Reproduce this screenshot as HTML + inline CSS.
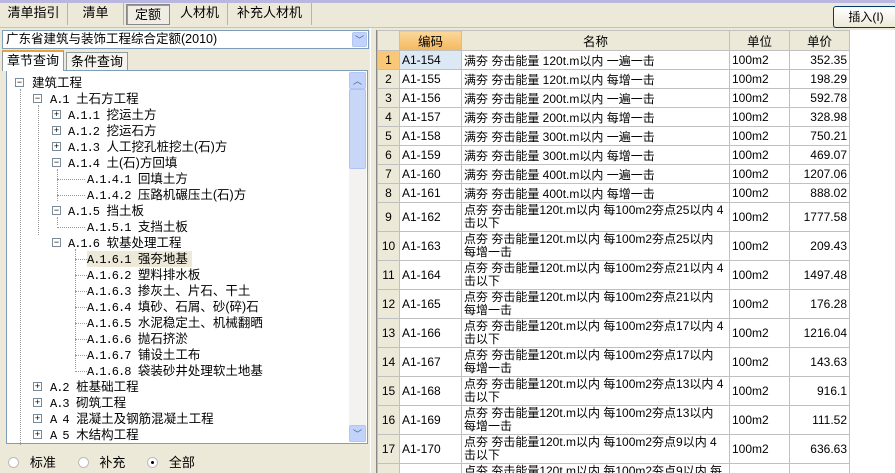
<!DOCTYPE html>
<html><head><meta charset="utf-8"><style>
*{margin:0;padding:0;box-sizing:border-box}
html,body{width:895px;height:473px;overflow:hidden}
body{background:#ece9d8;font-family:"Liberation Sans","WenQuanYi Zen Hei","Noto Sans CJK SC",sans-serif;font-size:12px;color:#000;position:relative}
.abs{position:absolute}
.m{font-family:"Liberation Mono",monospace;font-size:12px;letter-spacing:-1px;margin-right:4px}
.topline{left:0;top:0;width:895px;height:3px;background:#b9b6e0}
.tab{top:3px;height:22px;line-height:20px;font-size:13px;text-align:center;border-right:1px solid #b8b4a0}
.tabsel{border:1px solid #888;background:#f0eee4;box-shadow:inset 1px 1px 0 #999}
.ins{left:833px;top:6px;width:66px;height:22px;border:1px solid #003c74;border-radius:3px;background:linear-gradient(#fff,#ece9d8);text-align:center;line-height:20px;font-size:12px}
.combo{left:2px;top:30px;width:367px;height:19px;background:#fff;border:1px solid #7f9db9;line-height:17px;padding-left:3px;font-size:12.5px}
.cbtn{right:1px;top:1px;width:15px;height:15px;background:#c1d3fb;border:1px solid #b3c6f2;border-radius:2px;color:#4d6185;font-size:9px;text-align:center;line-height:14px}
.ltab{top:52px;height:19px;line-height:18px;font-size:13px;padding:0 4px;border:1px solid #919b9c;border-bottom:none;background:#f4f3ee}
.tree{left:6px;top:70px;width:362px;height:374px;background:#fff;border:1px solid #7f9db9}
.sb{left:349px;top:72px;width:17px;height:370px;background:#f3f2ee}
.sbb{width:17px;height:17px;background:#c1d3fb;border:1px solid #b3c6f2;border-radius:2px;color:#4d6185;font-size:9px;text-align:center;line-height:16px;position:absolute;left:0}
.thumb{position:absolute;left:0;top:17px;width:17px;height:80px;background:#c8d6f8;border:1px solid #b0c2ee;border-radius:2px}
.ti{position:absolute;height:16px;line-height:16px;font-size:12.5px;white-space:nowrap}
.bx{position:absolute;width:9px;height:9px;border:1px solid #7a8a99;background:#fff;font-size:9px;line-height:7px;text-align:center;color:#000}
.vl{position:absolute;border-left:1px dotted #999;width:0}
.hl{position:absolute;border-top:1px dotted #999;height:0}
.grid{left:376px;top:30px;width:519px;height:443px;background:#fff;border-left:1px solid #888;overflow:hidden}
table{border-collapse:collapse;position:absolute;left:0;top:0;table-layout:fixed;font-size:12px}
td{border:1px solid #c0c0c0;padding:0 2px;overflow:hidden;vertical-align:middle}
th{background:#ece9d8;font-weight:normal;border:1px solid #c0c0c0;height:20px;font-size:12.5px}
td.n{background:#ece9d8;text-align:center}
td.p{text-align:right}
tr.s td{height:19px}
tr.t td{height:29px}
.two{line-height:13px}
.rad{display:inline-block;width:11px;height:11px;border:1px solid #bbb;border-radius:50%;vertical-align:-1px;position:relative;background:#fff}
.rad.on::after{content:"";position:absolute;left:3px;top:3px;width:3px;height:3px;border-radius:50%;background:#000}
</style></head><body>
<div class="abs topline"></div>
<div class="abs tab" style="left:0;width:68px">清单指引</div>
<div class="abs tab" style="left:68px;width:56px">清单</div>
<div class="abs tab tabsel" style="left:126px;width:44px;top:4px;height:21px">定额</div>
<div class="abs tab" style="left:172px;width:56px">人材机</div>
<div class="abs tab" style="left:228px;width:84px">补充人材机</div>
<div class="abs" style="left:0;top:27px;width:895px;height:1px;background:#c6c3b2"></div>
<div class="abs ins">插入(I)</div>

<div class="abs combo">广东省建筑与装饰工程综合定额(2010)<div class="abs cbtn">﹀</div></div>
<div class="abs ltab" style="left:2px;top:50px;height:21px;background:#fff;border-top:2px solid #e8a23c;z-index:2">章节查询</div>
<div class="abs ltab" style="left:66px">条件查询</div>
<div class="abs tree">
<div class="vl" style="left:13px;top:18px;height:356px"></div>
<div class="vl" style="left:31px;top:34px;height:130px"></div>
<div class="vl" style="left:50px;top:98px;height:32px"></div>
<div class="vl" style="left:50px;top:146px;height:8px"></div>
<div class="vl" style="left:68px;top:178px;height:120px"></div>
</div>
<div class="abs sb"><div class="sbb" style="top:0">︿</div><div class="thumb"></div><div class="sbb" style="top:353px">﹀</div></div>

<div class="abs" style="left:8px;top:452px;font-size:13px;color:#000">
<span class="rad"></span>&nbsp;&nbsp; 标准 &nbsp;&nbsp;&nbsp;&nbsp;&nbsp;<span class="rad"></span>&nbsp;&nbsp; 补充 &nbsp;&nbsp;&nbsp;&nbsp;&nbsp;<span class="rad on"></span>&nbsp;&nbsp; 全部</div>
<div class="abs" style="left:370px;top:28px;width:6px;height:445px;background:#ece9d8;border-left:1px solid #fff"></div>

<div class="abs grid">
<table>
<colgroup><col style="width:22px"><col style="width:62px"><col style="width:268px"><col style="width:60px"><col style="width:60px"></colgroup>
<tr><th></th><th style="background:linear-gradient(#fbd89a,#f4b860)">编码</th><th>名称</th><th>单位</th><th>单价</th></tr>
<tr class="s"><td class="n" style="background:#f8c878">1</td><td style="background:#dde8f5">A1-154</td><td>满夯 夯击能量 120t.m以内 一遍一击</td><td>100m2</td><td class="p">352.35</td></tr>
<tr class="s"><td class="n">2</td><td>A1-155</td><td>满夯 夯击能量 120t.m以内 每增一击</td><td>100m2</td><td class="p">198.29</td></tr>
<tr class="s"><td class="n">3</td><td>A1-156</td><td>满夯 夯击能量 200t.m以内 一遍一击</td><td>100m2</td><td class="p">592.78</td></tr>
<tr class="s"><td class="n">4</td><td>A1-157</td><td>满夯 夯击能量 200t.m以内 每增一击</td><td>100m2</td><td class="p">328.98</td></tr>
<tr class="s"><td class="n">5</td><td>A1-158</td><td>满夯 夯击能量 300t.m以内 一遍一击</td><td>100m2</td><td class="p">750.21</td></tr>
<tr class="s"><td class="n">6</td><td>A1-159</td><td>满夯 夯击能量 300t.m以内 每增一击</td><td>100m2</td><td class="p">469.07</td></tr>
<tr class="s"><td class="n">7</td><td>A1-160</td><td>满夯 夯击能量 400t.m以内 一遍一击</td><td>100m2</td><td class="p">1207.06</td></tr>
<tr class="s"><td class="n">8</td><td>A1-161</td><td>满夯 夯击能量 400t.m以内 每增一击</td><td>100m2</td><td class="p">888.02</td></tr>
<tr class="t"><td class="n">9</td><td>A1-162</td><td class="two">点夯 夯击能量120t.m以内 每100m2夯点25以内 4击以下</td><td>100m2</td><td class="p">1777.58</td></tr>
<tr class="t"><td class="n">10</td><td>A1-163</td><td class="two">点夯 夯击能量120t.m以内 每100m2夯点25以内<br>每增一击</td><td>100m2</td><td class="p">209.43</td></tr>
<tr class="t"><td class="n">11</td><td>A1-164</td><td class="two">点夯 夯击能量120t.m以内 每100m2夯点21以内 4击以下</td><td>100m2</td><td class="p">1497.48</td></tr>
<tr class="t"><td class="n">12</td><td>A1-165</td><td class="two">点夯 夯击能量120t.m以内 每100m2夯点21以内<br>每增一击</td><td>100m2</td><td class="p">176.28</td></tr>
<tr class="t"><td class="n">13</td><td>A1-166</td><td class="two">点夯 夯击能量120t.m以内 每100m2夯点17以内 4击以下</td><td>100m2</td><td class="p">1216.04</td></tr>
<tr class="t"><td class="n">14</td><td>A1-167</td><td class="two">点夯 夯击能量120t.m以内 每100m2夯点17以内<br>每增一击</td><td>100m2</td><td class="p">143.63</td></tr>
<tr class="t"><td class="n">15</td><td>A1-168</td><td class="two">点夯 夯击能量120t.m以内 每100m2夯点13以内 4击以下</td><td>100m2</td><td class="p">916.1</td></tr>
<tr class="t"><td class="n">16</td><td>A1-169</td><td class="two">点夯 夯击能量120t.m以内 每100m2夯点13以内<br>每增一击</td><td>100m2</td><td class="p">111.52</td></tr>
<tr class="t"><td class="n">17</td><td>A1-170</td><td class="two">点夯 夯击能量120t.m以内 每100m2夯点9以内 4击以下</td><td>100m2</td><td class="p">636.63</td></tr>
<tr class="t"><td class="n">18</td><td>A1-171</td><td class="two">点夯 夯击能量120t.m以内 每100m2夯点9以内 每增一击</td><td>100m2</td><td class="p"></td></tr>
</table>
</div>

<div class="abs" style="left:6px;top:70px;width:343px;height:373px;overflow:hidden">
<div class="bx" style="left:9px;top:8px">−</div><div class="ti" style="left:26px;top:5px">建筑工程</div>
<div class="bx" style="left:27px;top:24px">−</div><div class="ti" style="left:44px;top:21px"><span class="m">A.1</span> 土石方工程</div>
<div class="bx" style="left:46px;top:40px">+</div><div class="ti" style="left:62px;top:37px"><span class="m">A.1.1</span> 挖运土方</div>
<div class="bx" style="left:46px;top:56px">+</div><div class="ti" style="left:62px;top:53px"><span class="m">A.1.2</span> 挖运石方</div>
<div class="bx" style="left:46px;top:72px">+</div><div class="ti" style="left:62px;top:69px"><span class="m">A.1.3</span> 人工挖孔桩挖土(石)方</div>
<div class="bx" style="left:46px;top:88px">−</div><div class="ti" style="left:62px;top:85px"><span class="m">A.1.4</span> 土(石)方回填</div>
<div class="hl" style="left:51px;top:109px;width:28px"></div><div class="ti" style="left:81px;top:101px"><span class="m">A.1.4.1</span> 回填土方</div>
<div class="hl" style="left:51px;top:125px;width:28px"></div><div class="ti" style="left:81px;top:117px"><span class="m">A.1.4.2</span> 压路机碾压土(石)方</div>
<div class="bx" style="left:46px;top:136px">−</div><div class="ti" style="left:62px;top:133px"><span class="m">A.1.5</span> 挡土板</div>
<div class="hl" style="left:51px;top:157px;width:28px"></div><div class="ti" style="left:81px;top:149px"><span class="m">A.1.5.1</span> 支挡土板</div>
<div class="bx" style="left:46px;top:168px">−</div><div class="ti" style="left:62px;top:165px"><span class="m">A.1.6</span> 软基处理工程</div>
<div class="hl" style="left:69px;top:189px;width:12px"></div><div class="ti" style="left:81px;top:181px;background:#ece9d8;padding-right:4px"><span class="m">A.1.6.1</span> 强夯地基</div>
<div class="hl" style="left:69px;top:205px;width:12px"></div><div class="ti" style="left:81px;top:197px"><span class="m">A.1.6.2</span> 塑料排水板</div>
<div class="hl" style="left:69px;top:221px;width:12px"></div><div class="ti" style="left:81px;top:213px"><span class="m">A.1.6.3</span> 掺灰土、片石、干土</div>
<div class="hl" style="left:69px;top:237px;width:12px"></div><div class="ti" style="left:81px;top:229px"><span class="m">A.1.6.4</span> 填砂、石屑、砂(碎)石</div>
<div class="hl" style="left:69px;top:253px;width:12px"></div><div class="ti" style="left:81px;top:245px"><span class="m">A.1.6.5</span> 水泥稳定土、机械翻晒</div>
<div class="hl" style="left:69px;top:269px;width:12px"></div><div class="ti" style="left:81px;top:261px"><span class="m">A.1.6.6</span> 抛石挤淤</div>
<div class="hl" style="left:69px;top:285px;width:12px"></div><div class="ti" style="left:81px;top:277px"><span class="m">A.1.6.7</span> 铺设土工布</div>
<div class="hl" style="left:69px;top:301px;width:12px"></div><div class="ti" style="left:81px;top:293px"><span class="m">A.1.6.8</span> 袋装砂井处理软土地基</div>
<div class="bx" style="left:27px;top:312px">+</div><div class="ti" style="left:44px;top:309px"><span class="m">A.2</span> 桩基础工程</div>
<div class="bx" style="left:27px;top:328px">+</div><div class="ti" style="left:44px;top:325px"><span class="m">A.3</span> 砌筑工程</div>
<div class="bx" style="left:27px;top:344px">+</div><div class="ti" style="left:44px;top:341px"><span class="m">A 4</span> 混凝土及钢筋混凝土工程</div>
<div class="bx" style="left:27px;top:360px">+</div><div class="ti" style="left:44px;top:357px"><span class="m">A 5</span> 木结构工程</div>
</div>
</body></html>
